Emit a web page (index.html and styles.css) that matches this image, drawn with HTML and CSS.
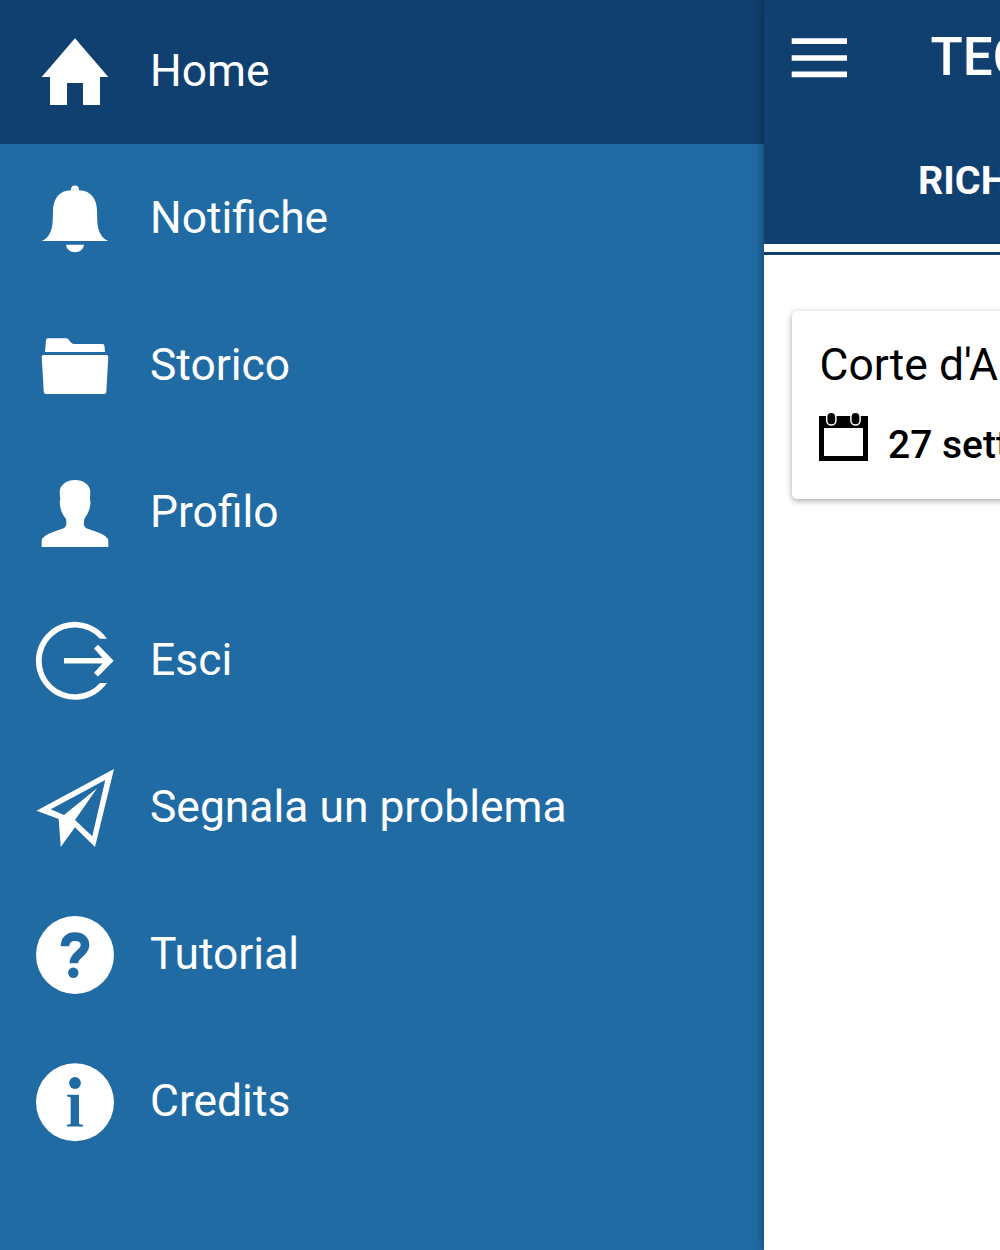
FILE: index.html
```html
<!DOCTYPE html>
<html lang="it">
<head>
<meta charset="utf-8">
<title>Menu</title>
<link rel="stylesheet" href="styles.css">
</head>
<body>
<div class="app">
  <nav class="drawer">
    <a class="item active">
      <svg class="icon" viewBox="0 0 78 78"><path d="M39 5.3 72.3 44H64V72H47V50H31V72H14V44H5.7Z"/></svg>
      <span class="label">Home</span>
    </a>
    <a class="item">
      <svg class="icon" viewBox="0 0 78 78"><path d="M35 10.300V9.500a4 4 0 0 1 8 0v.8C55 10.500 60.500 19 61 30C61.400 42 61 47 64 53Q67 59 72.300 61H5.700Q11 59 14 53C17 47 16.600 42 17 30C17.500 19 23 10.500 35 10.300ZM30 64.700H48C47.500 69 44 72.200 39 72.200S30.500 69 30 64.700Z"/></svg>
      <span class="label">Notifiche</span>
    </a>
    <a class="item">
      <svg class="icon" viewBox="0 0 78 78"><path d="M9 25 10 13Q10.200 11.300 12 11.300H30Q31.500 11.300 32.500 12.500L35 15.500Q36.500 17 38.500 17H66.500Q68.400 17 68.500 19L69 25ZM7.500 28H70.500Q72.400 28 72.300 30L70.300 65Q70.200 67 68.200 67H10Q8 67 7.800 65L5.700 30Q5.600 28 7.500 28Z"/></svg>
      <span class="label">Storico</span>
    </a>
    <a class="item">
      <svg class="icon" viewBox="0 0 78 78"><path d="M39 5C47 5 54.300 9.500 54.300 17L54 24.500Q54.800 27 54.200 30C53.500 36 51 40 48.300 44L47.800 48Q47.700 52 51 53.500L61 57Q72.300 61 72.300 66V72H5.700V66Q5.700 61 17 57L27 53.500Q30.500 52 30.400 48L30 44C27 40 24.500 36 24 30Q23.400 27 24.200 24.500L23.700 17C23.700 9.500 31 5 39 5Z"/></svg>
      <span class="label">Profilo</span>
    </a>
    <a class="item">
      <svg class="icon" viewBox="0 0 78 78"><path d="M71 16.700A39 39 0 1 0 71 61H64A33.400 33.400 0 1 1 64 16.700ZM28 36H66.500L58 26.400 62 22.700 77.700 38.700 62 54.400 58 50.700 66.500 41.400H28Z"/></svg>
      <span class="label">Esci</span>
    </a>
    <a class="item">
      <svg class="icon" viewBox="0 0 78 78"><path fill-rule="evenodd" d="M78 0 59 78 39 58.300 24.700 78 22.700 50 .5 41.700ZM14.700 40.300 28 46 61 19.300 39 51 56.300 67.300 69.300 11Z"/></svg>
      <span class="label">Segnala un problema</span>
    </a>
    <a class="item">
      <svg class="icon" viewBox="0 0 78 78"><circle cx="39" cy="39" r="39"/><path class="mark-line" d="M29 30.300C29 23.500 33 20.600 39 20.600C45.500 20.600 49 24 49 29C49 37.500 37.800 38 37.800 47.300"/><circle class="mark" cx="37.300" cy="56.800" r="5.200"/></svg>
      <span class="label">Tutorial</span>
    </a>
    <a class="item">
      <svg class="icon" viewBox="0 0 78 78"><circle cx="39" cy="39.300" r="39"/><circle class="mark" cx="39" cy="20" r="5.900"/><path class="mark" d="M31 31.700H43V60Q43 61.700 47 61.700V63.500H31V61.700Q34.700 61.700 34.700 60V35Q34.700 33.400 31 33.400Z"/></svg>
      <span class="label">Credits</span>
    </a>
  </nav>
  <main class="page">
    <header class="header">
      <div class="bar">
        <svg class="burger" viewBox="0 0 56 40"><path d="M-.3 .3H55V6H-.3ZM-.3 17.200H55V22.800H-.3ZM-.3 33.500H55V39.300H-.3Z"/></svg>
        <h1 class="title">TEC</h1>
      </div>
      <div class="tab">RICH</div>
    </header>
    <div class="indicator"></div>
    <section class="card">
      <div class="court">Corte d'A</div>
      <div class="date">
        <svg class="calendar" viewBox="0 0 50 50"><path fill-rule="evenodd" d="M0 4H49V49H0ZM5 16V44H44V16Z"/><g class="rings"><rect x="7.700" y=".2" width="9.200" height="12.800" rx="4.600"/><rect x="31.900" y=".2" width="9.200" height="12.800" rx="4.600"/></g></svg>
        <span class="day">27 sett</span>
      </div>
    </section>
  </main>
</div>
</body>
</html>
```
FILE: styles.css
```css
* { box-sizing: border-box; }
body { margin: 0; font-family: Roboto, "Liberation Sans", sans-serif; }
.app { display: flex; width: 1000px; height: 1250px; overflow: hidden; background: #fff; }
.drawer { width: 764px; flex: none; background: #206ba4; }
.item {
  display: flex;
  align-items: flex-start;
  height: 147.2px;
  padding: 36.2px 0 0 36px;
  gap: 36px;
  color: #fff;
  font-size: 44.4px;
  line-height: 76px;
  white-space: nowrap;
}
.active { background: #10406f; height: 144px; padding-top: 33.2px; }
.icon { width: 78px; height: 78px; flex: none; fill: #fff; overflow: visible; }
.label { margin-top: -.2px; }
.mark { fill: #206ba4; }
.mark-line { fill: none; stroke: #206ba4; stroke-width: 8.6; }
.page {
  position: relative;
  width: 236px;
  flex: none;
  background: #fff;
  box-shadow: 0 0 10px rgba(0, 0, 0, .4);
}
.header { height: 244px; background: #10406f; color: #fff; overflow: hidden; }
.bar { display: flex; height: 116px; padding: 38px 0 0 27.5px; }
.burger { width: 56px; height: 40px; flex: none; fill: #fff; overflow: visible; }
.title { margin: -13px 0 0 83px; font-size: 53px; font-weight: 500; line-height: 64px; }
.tab { padding: 41px 0 0 154px; font-size: 39.5px; font-weight: 700; line-height: 48px; white-space: nowrap; }
.indicator { height: 11px; border-bottom: 3px solid #10406f; }
.card {
  width: 300px;
  height: 188.5px;
  margin: 55.5px 0 0 28px;
  padding: 28px 0 0 27.5px;
  border-radius: 5px;
  background: #fff;
  box-shadow: 0 2px 6px rgba(0, 0, 0, .35);
  color: #000;
  white-space: nowrap;
}
.court { font-size: 44.4px; line-height: 52px; }
.date { display: flex; margin: 21px 0 0 -.5px; gap: 19px; font-size: 39px; font-weight: 500; line-height: 65px; }
.day { margin-top: 1px; }
.calendar { width: 50px; height: 50px; flex: none; overflow: visible; }
.rings { stroke: #fff; stroke-width: 1.5; }
```
